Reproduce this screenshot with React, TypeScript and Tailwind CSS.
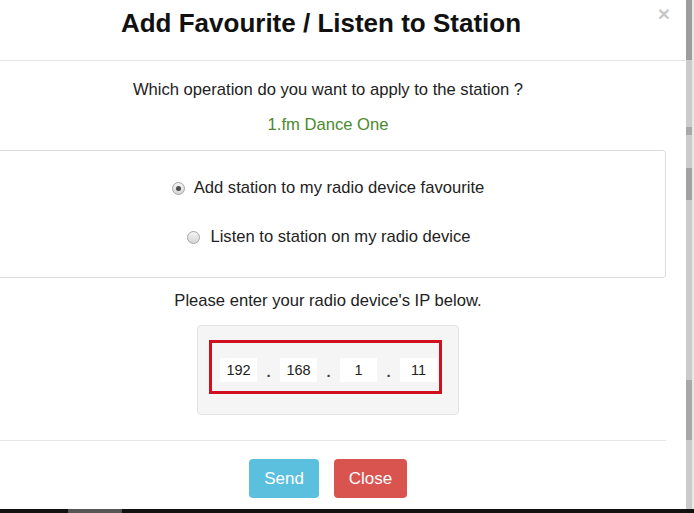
import React from 'react';

const font = { fontFamily: '"Liberation Sans", Arial, sans-serif' };

const Radio: React.FC<{ checked?: boolean }> = ({ checked }) => (
    <span className="w-[13px] h-[13px] rounded-full border border-[#a5a5a5] bg-gradient-to-b from-[#f4f4f4] to-[#d6d6d6] flex items-center justify-center shrink-0">
        {checked && <span className="w-[5px] h-[5px] rounded-full bg-[#4d4d4d]" />}
    </span>
);

const IpBox: React.FC<{ value: string }> = ({ value }) => (
    <div className="w-[37px] h-[24px] bg-white text-center text-[14.5px] leading-[24px] text-[#222]">{value}</div>
);

const Dot: React.FC = () => (
    <div className="w-[23px] h-[24px] text-center text-[15px] leading-[27px] font-bold text-[#444]">.</div>
);

const App: React.FC = () => {
    const octets = ['192', '168', '1', '11'];

    return (
        <div className="w-[694px] h-[513px] overflow-hidden bg-white flex flex-col" style={font}>
            <div className="flex flex-1 min-h-0">
                {/* Modal */}
                <div className="w-[716px] -ml-[30px] shrink-0 bg-white flex flex-col">
                    {/* Header */}
                    <div className="h-[61px] border-b border-[#e5e5e5] px-[15px] pt-[8px] flex items-start">
                        <h1 className="flex-1 text-center text-[26px] leading-[30px] font-bold text-[#111]">Add Favourite / Listen to Station</h1>
                        <button className="w-[14px] text-[21px] leading-[14px] font-bold text-[#c8c8c8] mt-[-1px]">×</button>
                    </div>

                    {/* Body */}
                    <div className="px-[20px] flex flex-col items-center text-[16.6px] text-[#222]">
                        <p className="mt-[18px] leading-[22px]">Which operation do you want to apply to the station ?</p>
                        <p className="mt-[13px] leading-[22px] text-[#4b8a2c]">1.fm Dance One</p>

                        <div className="mt-[14px] w-full h-[128px] border border-[#dddddd] rounded-[3px] pt-[26px] flex flex-col items-center gap-[27px]">
                            <label className="flex items-center gap-[9px] leading-[22px]">
                                <Radio checked />
                                <span>Add station to my radio device favourite</span>
                            </label>
                            <label className="flex items-center gap-[10px] leading-[22px] ml-[2px]">
                                <Radio />
                                <span>Listen to station on my radio device</span>
                            </label>
                        </div>

                        <p className="mt-[12px] leading-[22px]">Please enter your radio device's IP below.</p>

                        <div className="mt-[13px] w-[262px] h-[90px] bg-[#f5f5f5] border border-[#e3e3e3] rounded-[4px] pl-[11px] pt-[14px]">
                            <div className="w-[233px] h-[54px] border-[3px] border-[#d0101e] pl-[8px] pt-[15px] flex items-start">
                                {octets.map((o, i) => (
                                    <React.Fragment key={i}>
                                        {i > 0 && <Dot />}
                                        <IpBox value={o} />
                                    </React.Fragment>
                                ))}
                            </div>
                        </div>

                        {/* Footer */}
                        <div className="mt-[25px] w-full border-t border-[#e5e5e5] pt-[18px] flex justify-center gap-[15px]">
                            <button className="w-[70px] h-[39px] rounded-[4px] bg-[#5bc0de] text-white text-[17px]">Send</button>
                            <button className="w-[73px] h-[39px] rounded-[4px] bg-[#d9534f] text-white text-[17px]">Close</button>
                        </div>
                    </div>
                </div>

                {/* Backdrop strip */}
                <div className="w-[8px] shrink-0 flex">
                    <div className="w-[6px] flex flex-col bg-[#cbcbcb]">
                        <div className="h-[60px] bg-[#9c9c9c]" />
                        <div className="h-[67px]" />
                        <div className="h-[8px] bg-[#a8a8a8]" />
                        <div className="h-[33px]" />
                        <div className="h-[32px] bg-[#a2a2a2]" />
                        <div className="h-[180px]" />
                        <div className="h-[60px] bg-[#a8a8a8]" />
                    </div>
                    <div className="flex-1 bg-[#e8e8e8]" />
                </div>
            </div>
            <div className="h-[4px] bg-[#111] flex">
                <div className="w-[68px]" />
                <div className="w-[54px] bg-[#555]" />
            </div>
        </div>
    );
};

export default App;
